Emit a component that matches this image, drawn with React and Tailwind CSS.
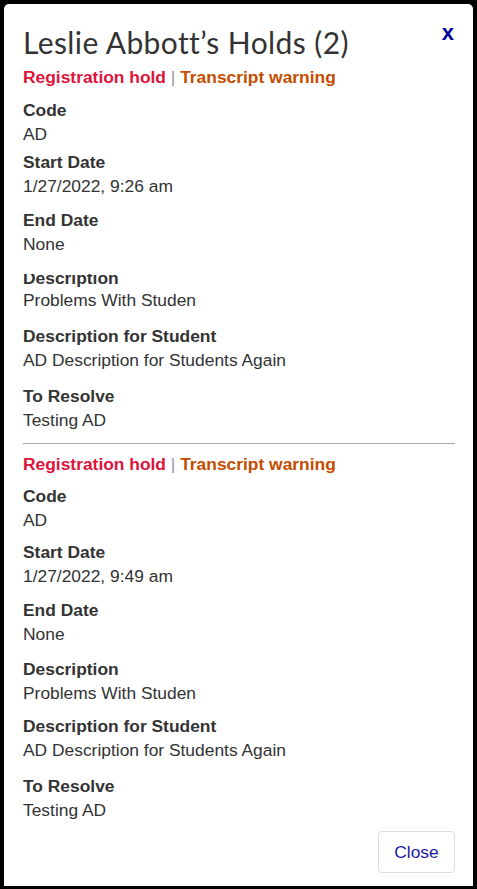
import React from 'react';

const holds = [
  {
    start: '1/27/2022, 9:26 am',
    gaps: ['mt-[9px]', 'mt-[3px]', 'mt-[9px]', 'mt-[6px]', 'mt-[11px]', 'mt-[11px]'],
  },
  {
    start: '1/27/2022, 9:49 am',
    gaps: ['mt-[8px]', 'mt-[7px]', 'mt-[9px]', 'mt-[10px]', 'mt-[8px]', 'mt-[11px]'],
  },
];

function Field({ label, value, gap, clipped }) {
  return (
    <div className={gap}>
      {clipped ? (
        <div className="pt-[11px]">
          <div className="h-[14px] overflow-hidden">
            <div className="font-bold leading-[24px] -mt-[8px]">{label}</div>
          </div>
        </div>
      ) : (
        <div className="font-bold leading-[24px]">{label}</div>
      )}
      <div className="leading-[25px]">{value}</div>
    </div>
  );
}

function Hold({ hold, first }) {
  const g = hold.gaps;
  return (
    <div>
      <div className={`font-bold leading-[24px] ${first ? 'mt-[6px]' : 'mt-[8px]'}`}>
        <span className="text-[#dc143c]">Registration hold</span>
        <span className="text-[#999] font-normal"> | </span>
        <span className="text-[#c44d00]">Transcript warning</span>
      </div>
      <Field label="Code" value="AD" gap={g[0]} />
      <Field label="Start Date" value={hold.start} gap={g[1]} />
      <Field label="End Date" value="None" gap={g[2]} />
      <Field label="Description" value="Problems With Studen" gap={g[3]} clipped={first} />
      <Field label="Description for Student" value="AD Description for Students Again" gap={g[4]} />
      <Field label="To Resolve" value="Testing AD" gap={g[5]} />
    </div>
  );
}

export default function App() {
  return (
    <div className="w-[477px] h-[889px] bg-black pt-[4px] px-[4px] font-['Liberation_Sans',Arial,sans-serif]">
      <div className="bg-white rounded-t-[5px] h-[882px] pl-[19px] pr-[18px] text-[17.4px] text-[#333]">
        <div className="flex justify-between items-start pt-[21px]">
          <h2 className="font-['Lato',sans-serif] text-[30px] leading-[34px] text-[#333] tracking-[0.4px]">
            Leslie Abbott’s Holds (2)
          </h2>
          <button className="text-[#000099] font-bold text-[22px] leading-[22px] mt-[-3px] mr-[1px]">x</button>
        </div>
        <Hold hold={holds[0]} first />
        <hr className="border-0 border-t border-[#aaa] mt-[10px]" />
        <Hold hold={holds[1]} />
        <div className="flex justify-end mt-[8px]">
          <button className="w-[77px] h-[42px] border border-[#ddd] rounded-[4px] text-[#1a1aa0]">
            Close
          </button>
        </div>
      </div>
    </div>
  );
}
